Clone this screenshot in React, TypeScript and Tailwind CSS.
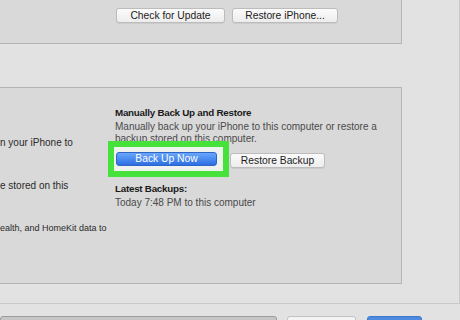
import React from 'react';

// Fenêtre de sauvegarde iPhone (vue partielle)
function GrayButton({ label, className = '' }: { label: string; className?: string }) {
  return (
    <button
      className={`h-[15px] rounded-[3px] border border-[#bcbcbc] bg-gradient-to-b from-[#fbfbfb] to-[#ededed] text-[10.3px] leading-[13px] text-[#1c1c1c] shadow-[0_1px_0_rgba(0,0,0,0.06)] ${className}`}
    >
      {label}
    </button>
  );
}

export default function App() {
  return (
    <div
      className="w-[460px] h-[320px] overflow-hidden bg-[#e2e2e2] text-[#1f1f1f]"
      style={{ fontFamily: '"Liberation Sans", Arial, sans-serif' }}
    >
      <div className="w-[460px] h-[304px] border-r border-b border-[#c9c9c9]">
        {/* Panneau logiciel */}
        <div className="w-[402px] h-[44px] bg-[#d9d9d9] border-r border-b border-[#b4b4b4] flex gap-[7px] pl-[116px] pt-[8px]">
          <GrayButton label="Check for Update" className="w-[109px]" />
          <GrayButton label="Restore iPhone..." className="w-[106px]" />
        </div>

        {/* Panneau sauvegardes */}
        <div className="mt-[43px] w-[402px] h-[197px] bg-[#d9d9d9] border-t border-r border-b border-[#b4b4b4] flex">
          <div className="w-[115px] shrink-0 text-[10px] text-[#2a2a2a] whitespace-nowrap">
            <div className="mt-[48px] leading-[14px]">n your iPhone to</div>
            <div className="mt-[29px] leading-[14px]">e stored on this</div>
            <div className="mt-[29px] text-[9px] leading-[12px]">ealth, and HomeKit data to</div>
          </div>
          <div className="flex flex-col pt-[18px] whitespace-nowrap">
            <div className="text-[9.8px] font-bold leading-[14px] tracking-[-0.25px] text-[#1a1a1a]">Manually Back Up and Restore</div>
            <div className="mt-px text-[10px] leading-[12px] text-[#4a4a4a]">
              <div>Manually back up your iPhone to this computer or restore a</div>
              <div>backup stored on this computer.</div>
            </div>
            <div className="mt-[-4px] flex items-center">
              <div className="ml-[-7px] w-[121px] h-[36px] border-[6px] border-[#46e13b] bg-[#eef3ee] flex items-center pl-[2px]">
                <button className="w-[101px] h-[14px] rounded-[3px] border border-[#2f64c9] bg-gradient-to-b from-[#69a6fb] to-[#2d6fe3] text-[10.3px] leading-[12px] text-white">
                  Back Up Now
                </button>
              </div>
              <GrayButton label="Restore Backup" className="ml-px mt-[2px] w-[95px]" />
            </div>
            <div className="mt-[5px] text-[9.8px] font-bold leading-[14px] tracking-[-0.25px] text-[#1a1a1a]">Latest Backups:</div>
            <div className="mt-px text-[10px] leading-[12px] text-[#4a4a4a]">Today 7:48 PM to this computer</div>
          </div>
        </div>
      </div>

      {/* Barre du bas */}
      <div className="flex items-start pt-[12px]">
        <div className="w-[277px] h-[12px] rounded-[3px] border border-[#9c9c9c] bg-[#c6c6c6]" />
        <div className="ml-[10px] w-[69px] h-[12px] rounded-[3px] border border-[#c2c2c2] bg-[#f4f4f4]" />
        <div className="ml-[11px] w-[55px] h-[12px] rounded-[3px] border border-[#3f79cf] bg-[#4d8be0]" />
      </div>
    </div>
  );
}
